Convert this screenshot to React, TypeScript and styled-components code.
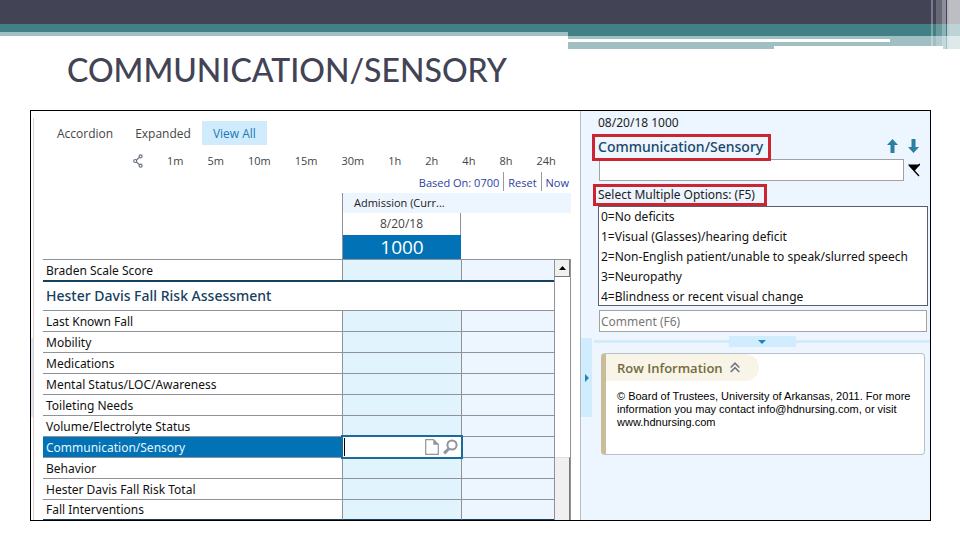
import React from "react";
import styled, { createGlobalStyle, css } from "styled-components";

const GlobalStyle = createGlobalStyle`
  *, *::before, *::after { box-sizing: border-box; }
  body { margin: 0; background: #fff; }
  button, input { font: inherit; color: inherit; }
  h1, h2, h3, p, ul { margin: 0; padding: 0; font-weight: inherit; }
`;

const toolbarFont = `"Open Sans", "Noto Sans", sans-serif`;
const dataFont = `"Noto Sans", "Open Sans", sans-serif`;
const line = "#8f9299";
const navy = "#17405f";
const blue = "#0072b5";
const sky = "#edf5fe";
const paleCyan = "#e1f4fe";
const handle = "#d1ecfd";

const Slide = styled.main`
  min-height: 100vh;
  background: #fff;
  font-family: ${dataFont};
  font-size: 12px;
  color: #222;
`;

const Banner = styled.svg`
  display: block;
  width: 100%;
  height: 49px;
`;

const SlideTitle = styled.h1`
  height: 61px;
  padding-left: 67px;
  font-family: "Lato", sans-serif;
  font-size: 32px;
  font-weight: 500;
  line-height: 42px;
  color: #424456;
  white-space: nowrap;
`;

const Frame = styled.section`
  display: grid;
  grid-template-columns: minmax(0, 549fr) minmax(0, 350fr);
  margin: 0 29px 0 30px;
  border: 1px solid #000;
`;

const Flowsheet = styled.div`
  display: flex;
`;

const LeftRail = styled.div`
  width: 3px;
  margin-top: 7px;
  padding-top: 220px;
  border-right: 1px solid #dccfd2;
`;

const RailMark = styled.div`
  height: 79px;
  background: #e1e6f4;
`;

const SheetBody = styled.div`
  flex: 1;
  min-width: 0;
  padding: 10px 9px 0;
`;

const Views = styled.div`
  display: flex;
  height: 24px;
  padding-left: 3px;
  font-family: ${toolbarFont};
`;

const ViewButton = styled.button<{ $active?: boolean }>`
  height: 24px;
  padding: 0 11px;
  border: 0;
  background: ${(p) => (p.$active ? "#d0ebfc" : "transparent")};
  color: ${(p) => (p.$active ? "#2379b5" : "#444")};
`;

const Intervals = styled.div`
  display: flex;
  align-items: center;
  gap: 24px;
  height: 32px;
  padding-left: 90px;
  font-family: ${toolbarFont};
  font-size: 11px;
`;

const PlainButton = styled.button`
  padding: 0;
  border: 0;
  background: transparent;
  color: #444;
  line-height: 16px;
  white-space: nowrap;

  svg { display: block; }
`;

const BaseBar = styled.div`
  display: flex;
  justify-content: flex-end;
  height: 21px;
  margin-top: -5px;
  padding: 0 2px 2px 0;
  font-family: ${toolbarFont};
  font-size: 11px;
  color: #2b41a4;
`;

const BaseItem = styled.button`
  padding: 2px 4px 0;
  border: 0;
  border-left: 1px solid #9a9a9a;
  background: transparent;
  line-height: 17px;

  &:first-child { border-left: 0; }
  &:last-child { padding-right: 0; }
`;

const ColumnHead = styled.div`
  display: grid;
  grid-template-columns: 1fr 119px 110px;
  grid-template-rows: 20px 22px 24px;
  font-family: ${toolbarFont};
`;

const Encounter = styled.div`
  grid-column: 2 / 4;
  padding-left: 11px;
  border-left: 1px solid ${line};
  background: ${sky};
  font-size: 11px;
  line-height: 20px;
`;

const DateCell = styled.div`
  grid-column: 2;
  border-left: 1px solid ${line};
  border-right: 1px solid ${line};
  line-height: 22px;
  text-align: center;
  color: #444;
`;

const TimeCell = styled.div`
  grid-column: 2;
  border-left: 1px solid ${line};
  background: ${blue};
  color: #fff;
  font-size: 19px;
  line-height: 25px;
  text-align: center;
`;

const Grid = styled.div`
  display: flex;
`;

const Table = styled.table`
  flex: 1;
  min-width: 0;
  table-layout: fixed;
  border-spacing: 0;
  color: #111;

  col:nth-child(2) { width: 119px; }
  col:nth-child(3) { width: 93px; }
  tr:last-child > * { border-bottom: 1px solid ${navy}; }
`;

const RowLabel = styled.th<{ $selected?: boolean }>`
  height: 21px;
  padding: 0 3px;
  border-top: 1px solid ${line};
  line-height: 19px;
  font-weight: 400;
  text-align: left;
  white-space: nowrap;
  background: ${(p) => (p.$selected ? blue : "#fff")};
  color: ${(p) => (p.$selected ? "#e6f6ff" : "inherit")};
`;

const GroupLabel = styled.th`
  height: 30px;
  padding: 0 3px;
  border-top: 2px solid ${navy};
  font-size: 14px;
  line-height: 28px;
  font-weight: 500;
  text-align: left;
  color: ${navy};
`;

const Cell = styled.td<{ $current?: boolean }>`
  position: relative;
  padding: 0;
  border-top: 1px solid ${line};
  border-left: 1px solid ${line};
  background: ${(p) => (p.$current ? paleCyan : sky)};
`;

const Editor = styled.div`
  position: absolute;
  inset: -2px;
  z-index: 1;
  display: flex;
  align-items: center;
  gap: 4px;
  padding: 0 3px 0 1px;
  border: 2px solid #1a6b9a;
  background: #fff;
`;

const Caret = styled.span`
  width: 1px;
  height: 18px;
  background: #000;
`;

const EditorInput = styled.input`
  flex: 1;
  min-width: 0;
  height: 18px;
  padding: 0;
  border: 0;
  outline: 0;
  background: transparent;
`;

const ScrollBar = styled.div`
  display: flex;
  flex-direction: column;
  justify-content: space-between;
  width: 17px;
  border: 1px solid ${line};
  border-bottom: 0;
`;

const ScrollUp = styled.button`
  display: grid;
  place-items: center;
  height: 17px;
  padding: 0;
  border: 0;
  border-right: 1px solid #777;
  border-bottom: 1px solid #777;
  background: #f0f0f0;
`;

const Thumb = styled.div`
  height: 63px;
  border-right: 1px solid #777;
  border-top: 1px solid #ddd;
  background: #f0f0f0;
`;

const Details = styled.aside`
  display: flex;
  border-left: 1px solid #b5bdc9;
  background: ${sky};
`;

const SideHandle = styled.button`
  display: grid;
  place-items: center;
  width: 11px;
  height: 79px;
  margin-top: 227px;
  padding: 0;
  border: 0;
  background: ${handle};
`;

const DetailBody = styled.div`
  flex: 1;
  min-width: 0;
`;

const Stamp = styled.p`
  padding-left: 6px;
  line-height: 23px;
`;

const TitleRow = styled.div`
  display: flex;
  align-items: flex-start;
  justify-content: space-between;
  margin-bottom: -2px;
  padding-right: 11px;
`;

const marked = css`
  position: relative;
  z-index: 1;
  border: 3px solid #cc2430;
  white-space: nowrap;
`;

const DetailTitle = styled.h2`
  ${marked}
  padding: 0 5px 2px 3px;
  font-size: 14px;
  font-weight: 500;
  line-height: 19px;
  color: #17476b;
`;

const Arrows = styled.div`
  display: flex;
  gap: 10px;
  padding-top: 5px;
`;

const EntryRow = styled.div`
  display: flex;
  gap: 4px;
  padding: 0 10px 0 7px;
`;

const TextBox = styled.input`
  flex: 1;
  min-width: 0;
  height: 22px;
  padding: 0 1px;
  border: 1px solid #a2a2a2;
  border-radius: 0;
  background: #fff;

  &::placeholder { color: #777; opacity: 1; }
`;

const OptionsLabel = styled.h3`
  ${marked}
  width: fit-content;
  margin: 3px 0 0 1px;
  padding: 0 9px 0 2px;
  font-size: 12px;
  line-height: 16px;
`;

const Options = styled.ul`
  margin: 0 2px 4px 6px;
  padding: 0 2px;
  border: 1px solid #5a5e6a;
  background: #fff;
  list-style: none;
  color: #111;
`;

const Option = styled.li`
  height: 20px;
  line-height: 19px;
  white-space: nowrap;

  &:last-child { height: 18px; }
`;

const CommentRow = styled.div`
  display: flex;
  padding: 0 3px 0 7px;
`;

const Splitter = styled.div`
  display: flex;
  align-items: center;
  margin: 4px 0 6px 2px;

  &::before, &::after {
    content: "";
    flex: 1;
    height: 3px;
    background: #d5ebfa;
  }
`;

const SplitHandle = styled.button`
  display: grid;
  place-items: center;
  width: 67px;
  height: 11px;
  padding: 0;
  border: 0;
  background: ${handle};
`;

const InfoCard = styled.article`
  height: 102px;
  margin: 0 5px 0 9px;
  border: 1px solid #b8c0c6;
  border-left: 5px solid #c8bd98;
  border-radius: 4px;
  background: #fff;
`;

const InfoHeader = styled.button`
  display: flex;
  align-items: center;
  gap: 7px;
  height: 27px;
  padding: 0 19px 0 11px;
  border: 0;
  border-radius: 0 14px 14px 0;
  background: #f8f4e7;
  color: #716b3b;
  font-family: ${toolbarFont};
  font-size: 13px;
  font-weight: 600;
`;

const InfoText = styled.p`
  padding: 9px 11px;
  font-family: "Liberation Sans", Arial, sans-serif;
  font-size: 11px;
  line-height: 13px;
  color: #000;
`;

const rows = [
  "Last Known Fall",
  "Mobility",
  "Medications",
  "Mental Status/LOC/Awareness",
  "Toileting Needs",
  "Volume/Electrolyte Status",
  "Communication/Sensory",
  "Behavior",
  "Hester Davis Fall Risk Total",
  "Fall Interventions",
];

const intervals = ["1m", "5m", "10m", "15m", "30m", "1h", "2h", "4h", "8h", "24h"];

const options = [
  "0=No deficits",
  "1=Visual (Glasses)/hearing deficit",
  "2=Non-English patient/unable to speak/slurred speech",
  "3=Neuropathy",
  "4=Blindness or recent visual change",
];

function BannerArt() {
  return (
    <Banner viewBox="0 0 960 49" preserveAspectRatio="none" shapeRendering="crispEdges" aria-hidden="true">
      <rect width="960" height="24" fill="#424456" />
      <rect y="24" width="960" height="12" fill="#438086" />
      <rect y="32" width="568" height="4" fill="#a0bfc3" />
      <rect x="568" y="36" width="392" height="3" fill="#a0bfc3" />
      <rect x="890" y="36" width="70" height="10" fill="#a0bfc3" />
      <rect x="568" y="42" width="375" height="4" fill="#a0bfc3" />
      <rect x="568" y="42" width="206" height="7" fill="#a0bfc3" />
      <rect x="943" y="46" width="17" height="3" fill="#a0bfc3" />
      <rect x="931" width="2" height="46" fill="#fff" opacity="0.3" />
      <rect x="936" width="6" height="46" fill="#fff" opacity="0.2" />
      <rect x="942" width="4" height="49" fill="#fff" opacity="0.4" />
      <rect x="947" width="2" height="49" fill="#fff" opacity="0.6" />
      <rect x="949" width="11" height="49" fill="#fff" opacity="0.65" />
    </Banner>
  );
}

function CellEditor() {
  return (
    <Editor>
      <Caret />
      <EditorInput aria-label="Communication/Sensory value" />
      <PlainButton aria-label="Add note">
        <svg width="14" height="16" viewBox="0 0 14 16">
          <path d="M.7.7h7.8l4.8 4.8v9.8H.7z" fill="#fff" stroke="#8d959e" strokeWidth="1.2" />
          <path d="M8.3.6v5.1h5.2z" fill="#8d959e" />
        </svg>
      </PlainButton>
      <PlainButton aria-label="Look up">
        <svg width="15" height="16" viewBox="0 0 15 16" fill="none" stroke="#8d959e">
          <circle cx="9" cy="6" r="4.6" strokeWidth="2" />
          <path d="M5.5 10 1.2 14.4" strokeWidth="3" />
        </svg>
      </PlainButton>
    </Editor>
  );
}

export default function App() {
  return (
    <Slide>
      <GlobalStyle />
      <BannerArt />
      <SlideTitle>COMMUNICATION/SENSORY</SlideTitle>
      <Frame>
        <Flowsheet>
          <LeftRail>
            <RailMark />
          </LeftRail>
          <SheetBody>
            <Views>
              <ViewButton>Accordion</ViewButton>
              <ViewButton>Expanded</ViewButton>
              <ViewButton $active>View All</ViewButton>
            </Views>
            <Intervals>
              <PlainButton aria-label="Time scale">
                <svg width="10" height="14" viewBox="0 0 10 14" fill="none" stroke="#667180" strokeWidth="1.2">
                  <path d="M3.5 6 6.3 3.4M3.4 8 6.3 10.6" />
                  <circle cx="2.2" cy="7" r="1.5" />
                  <circle cx="7.6" cy="2.3" r="1.5" />
                  <circle cx="7.6" cy="11.7" r="1.5" />
                </svg>
              </PlainButton>
              {intervals.map((label) => (
                <PlainButton key={label}>{label}</PlainButton>
              ))}
            </Intervals>
            <BaseBar>
              <BaseItem>Based On: 0700</BaseItem>
              <BaseItem>Reset</BaseItem>
              <BaseItem>Now</BaseItem>
            </BaseBar>
            <ColumnHead>
              <Encounter>Admission (Curr...</Encounter>
              <DateCell>8/20/18</DateCell>
              <TimeCell>1000</TimeCell>
            </ColumnHead>
            <Grid>
              <Table>
                <colgroup>
                  <col />
                  <col />
                  <col />
                </colgroup>
                <tbody>
                  <tr>
                    <RowLabel scope="row">Braden Scale Score</RowLabel>
                    <Cell $current />
                    <Cell />
                  </tr>
                  <tr>
                    <GroupLabel colSpan={3}>Hester Davis Fall Risk Assessment</GroupLabel>
                  </tr>
                  {rows.map((label) => {
                    const selected = label === "Communication/Sensory";
                    return (
                      <tr key={label}>
                        <RowLabel scope="row" $selected={selected}>{label}</RowLabel>
                        <Cell $current>{selected && <CellEditor />}</Cell>
                        <Cell />
                      </tr>
                    );
                  })}
                </tbody>
              </Table>
              <ScrollBar>
                <ScrollUp aria-label="Scroll up">
                  <svg width="7" height="4" viewBox="0 0 7 4"><path d="M0 4 3.5 0 7 4z" fill="#000" /></svg>
                </ScrollUp>
                <Thumb />
              </ScrollBar>
            </Grid>
          </SheetBody>
        </Flowsheet>
        <Details>
          <SideHandle aria-label="Collapse panel">
            <svg width="4" height="8" viewBox="0 0 4 8"><path d="M0 0 4 4 0 8z" fill="#1b87bd" /></svg>
          </SideHandle>
          <DetailBody>
            <Stamp>08/20/18 1000</Stamp>
            <TitleRow>
              <DetailTitle>Communication/Sensory</DetailTitle>
              <Arrows>
                <PlainButton aria-label="Previous row">
                  <svg width="11" height="14" viewBox="0 0 11 14"><path d="M5.5 0 11 6H7.5v8h-4V6H0z" fill="#2b7fa3" /></svg>
                </PlainButton>
                <PlainButton aria-label="Next row">
                  <svg width="11" height="14" viewBox="0 0 11 14"><path d="M5.5 14 11 8H7.5V0h-4v8H0z" fill="#2b7fa3" /></svg>
                </PlainButton>
              </Arrows>
            </TitleRow>
            <EntryRow>
              <TextBox aria-label="Communication/Sensory" />
              <PlainButton aria-label="Choose value">
                <svg width="12" height="14" viewBox="0 0 12 14">
                  <path d="M0 1.5h12L6.5 8z" fill="#000" />
                  <path d="M12 1 5.5 7M1 2l10 11" stroke="#000" strokeWidth="1.3" />
                </svg>
              </PlainButton>
            </EntryRow>
            <OptionsLabel>Select Multiple Options: (F5)</OptionsLabel>
            <Options>
              {options.map((text) => (
                <Option key={text}>{text}</Option>
              ))}
            </Options>
            <CommentRow>
              <TextBox aria-label="Comment" placeholder="Comment (F6)" />
            </CommentRow>
            <Splitter>
              <SplitHandle aria-label="Resize panel">
                <svg width="8" height="4" viewBox="0 0 8 4"><path d="M0 0h8L4 4z" fill="#1b87bd" /></svg>
              </SplitHandle>
            </Splitter>
            <InfoCard>
              <InfoHeader>
                Row Information
                <svg width="10" height="11" viewBox="0 0 10 11" fill="none" stroke="#6d7782" strokeWidth="1.6">
                  <path d="M.7 5.5 5 1.2l4.3 4.3M.7 10 5 5.7 9.3 10" />
                </svg>
              </InfoHeader>
              <InfoText>
                © Board of Trustees, University of Arkansas, 2011. For more information you may contact
                info@hdnursing.com, or visit www.hdnursing.com
              </InfoText>
            </InfoCard>
          </DetailBody>
        </Details>
      </Frame>
    </Slide>
  );
}
